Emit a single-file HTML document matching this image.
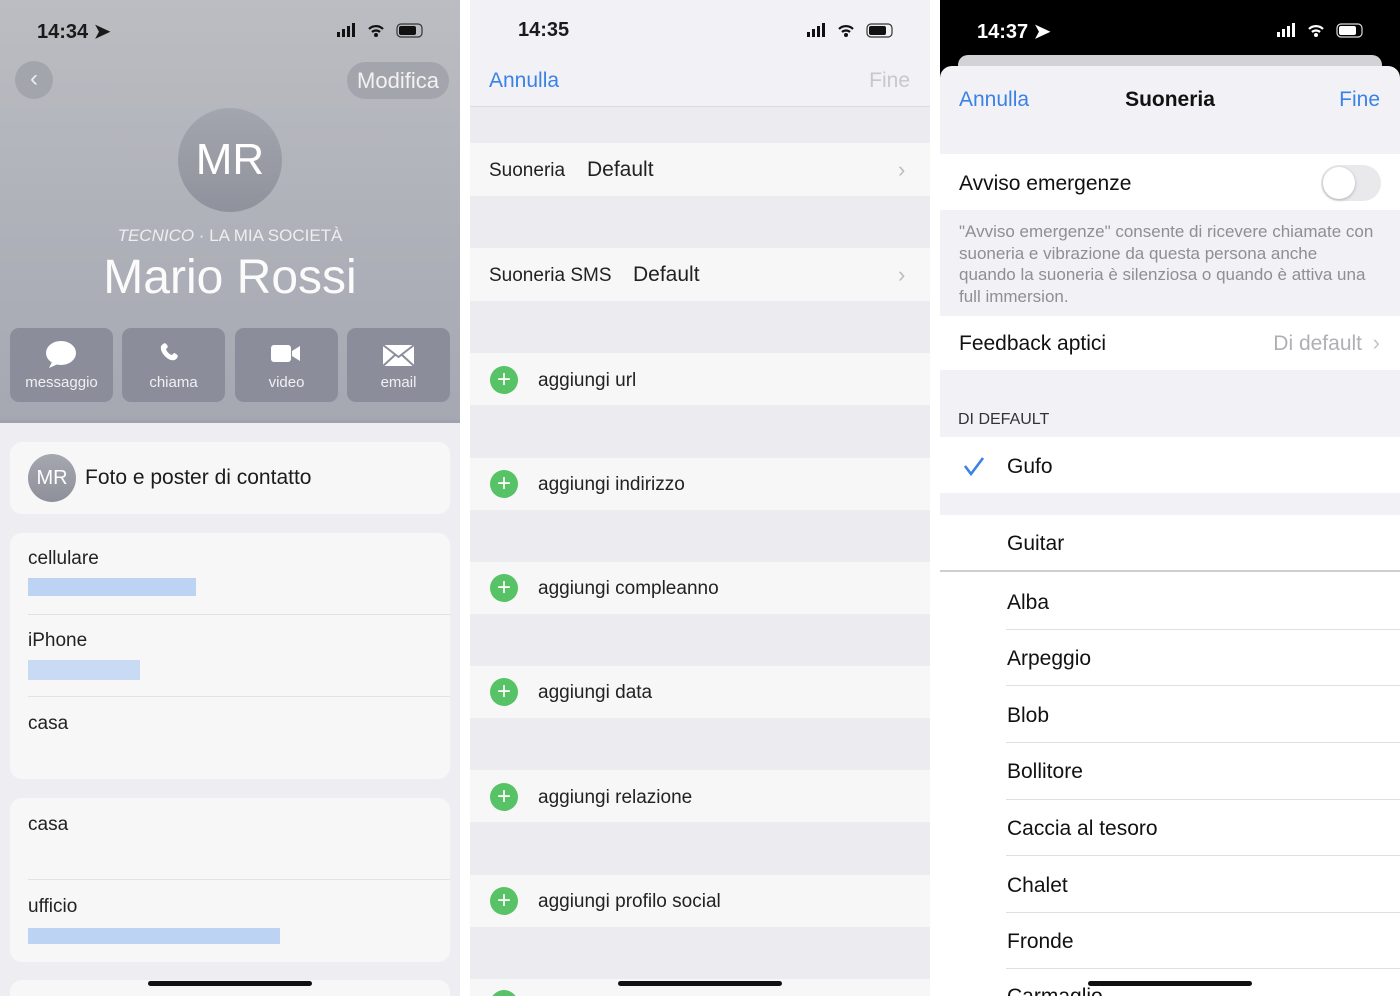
<!DOCTYPE html>
<html><head><meta charset="utf-8"><style>
*{margin:0;padding:0;box-sizing:border-box}
body{width:1400px;height:996px;overflow:hidden;background:#fff;font-family:"Liberation Sans",sans-serif;position:relative}
.p{position:absolute;top:0;height:996px;overflow:hidden}
.abs{position:absolute}
.t{position:absolute;white-space:nowrap}
</style></head><body>
<!-- LEFT -->
<div class="p" style="left:0;width:460px;background:#eeeef2">
 <div class="abs" style="left:0;top:0;width:460px;height:422px;background:linear-gradient(#bbbdc2,#a5a7b2)"></div>
 <div class="abs" style="left:0;top:420px;width:460px;height:3px;background:#9fa1ab"></div>
 <div class="t" style="left:37px;top:19px;font-size:20px;font-weight:bold;color:#1a1a1a">14:34 ➤</div>
 <svg class="abs" style="left:335px;top:20px" width="100" height="20"><rect x="2" y="12" width="3" height="5" fill="#111"/><rect x="7" y="9" width="3" height="8" fill="#111"/><rect x="12" y="6" width="3" height="11" fill="#111"/><rect x="17" y="3" width="3" height="14" fill="#111"/><path d="M34 9a10 10 0 0 1 14 0M37 12a6 6 0 0 1 8 0" stroke="#111" stroke-width="2.2" fill="none"/><circle cx="41" cy="15" r="2" fill="#111"/><rect x="62" y="4" width="25" height="13" rx="4" fill="none" stroke="#333" stroke-width="1.2"/><rect x="64" y="6" width="17" height="9" rx="2" fill="#111"/></svg>
 <div class="abs" style="left:15px;top:61px;width:38px;height:38px;border-radius:50%;background:#a3a5ac;color:#eee;font-size:24px;text-align:center;line-height:36px">‹</div>
 <div class="abs" style="left:347px;top:62px;width:102px;height:37px;border-radius:19px;background:#a3a5ac;color:#f2f2f2;font-size:22px;text-align:center;line-height:38px">Modifica</div>
 <div class="abs" style="left:178px;top:108px;width:104px;height:104px;border-radius:50%;background:linear-gradient(#a4a6ae,#8f919c);color:#fff;font-size:44px;text-align:center;line-height:104px">MR</div>
 <div class="t" style="left:0;width:460px;text-align:center;top:226px;font-size:17px;color:#eeeef0"><i>TECNICO</i> · LA MIA SOCIETÀ</div>
 <div class="t" style="left:0;width:460px;text-align:center;top:250px;font-size:48px;color:#fbfbfb">Mario Rossi</div>
 <div class="abs" style="left:10px;top:328px;width:103px;height:74px;border-radius:9px;background:#8b8d9a"></div>
 <div class="abs" style="left:122px;top:328px;width:103px;height:74px;border-radius:9px;background:#8b8d9a"></div>
 <div class="abs" style="left:235px;top:328px;width:103px;height:74px;border-radius:9px;background:#8b8d9a"></div>
 <div class="abs" style="left:347px;top:328px;width:103px;height:74px;border-radius:9px;background:#8b8d9a"></div>
 <svg class="abs" style="left:0;top:336px" width="460" height="34"><ellipse cx="61" cy="17" rx="15" ry="12" fill="#fff"/><path d="M52 26l-3 6 9-4z" fill="#fff"/><path d="M163 8c2-2 4 0 5 3l-2 2c1 3 3 5 6 6l2-2c3 1 5 3 3 5-2 3-6 3-10 0s-7-8-6-12z" fill="#fff"/><rect x="271" y="9" width="20" height="17" rx="3" fill="#fff"/><path d="M292 15l8-5v15l-8-5z" fill="#fff"/><rect x="383" y="9" width="31" height="21" fill="#fff"/><path d="M383 9l15.5 12L414 9M383 30l12-11M414 30l-12-11" stroke="#8b8d9a" stroke-width="2" fill="none"/></svg>
 <div class="t" style="left:10px;width:103px;text-align:center;top:374px;font-size:15px;color:#f0f0f2">messaggio</div>
 <div class="t" style="left:122px;width:103px;text-align:center;top:374px;font-size:15px;color:#f0f0f2">chiama</div>
 <div class="t" style="left:235px;width:103px;text-align:center;top:374px;font-size:15px;color:#f0f0f2">video</div>
 <div class="t" style="left:347px;width:103px;text-align:center;top:374px;font-size:15px;color:#f0f0f2">email</div>
 <div class="abs" style="left:10px;top:442px;width:440px;height:72px;border-radius:12px;background:#f7f7f8"></div>
 <div class="abs" style="left:28px;top:454px;width:48px;height:48px;border-radius:50%;background:linear-gradient(#a6a8b0,#8d8f9a);color:#fff;font-size:20px;text-align:center;line-height:48px">MR</div>
 <div class="t" style="left:85px;top:466px;font-size:21px;color:#1c1c1c">Foto e poster di contatto</div>
 <div class="abs" style="left:10px;top:533px;width:440px;height:246px;border-radius:12px;background:#f7f7f8"></div>
 <div class="t" style="left:28px;top:548px;font-size:19px;color:#222">cellulare</div>
 <div class="abs" style="left:28px;top:578px;width:168px;height:18px;background:#bcd3f3"></div>
 <div class="abs" style="left:28px;top:614px;width:422px;height:1px;background:#e2e2e4"></div>
 <div class="t" style="left:28px;top:630px;font-size:19px;color:#222">iPhone</div>
 <div class="abs" style="left:28px;top:660px;width:112px;height:20px;background:#c9daf4"></div>
 <div class="abs" style="left:28px;top:696px;width:422px;height:1px;background:#e2e2e4"></div>
 <div class="t" style="left:28px;top:713px;font-size:19px;color:#222">casa</div>
 <div class="abs" style="left:10px;top:798px;width:440px;height:164px;border-radius:12px;background:#f7f7f8"></div>
 <div class="t" style="left:28px;top:814px;font-size:19px;color:#222">casa</div>
 <div class="abs" style="left:28px;top:879px;width:422px;height:1px;background:#e2e2e4"></div>
 <div class="t" style="left:28px;top:896px;font-size:19px;color:#222">ufficio</div>
 <div class="abs" style="left:28px;top:928px;width:252px;height:16px;background:#bcd3f3"></div>
 <div class="abs" style="left:10px;top:980px;width:440px;height:30px;border-radius:12px;background:#f7f7f8"></div>
 <div class="abs" style="left:148px;top:981px;width:164px;height:5px;border-radius:3px;background:#111"></div>
</div>
<!-- MIDDLE -->
<div class="p" style="left:470px;width:460px;background:#ececf0">
 <div class="abs" style="left:0;top:0;width:460px;height:107px;background:#f2f2f6;border-bottom:1px solid #dcdce0"></div>
 <div class="t" style="left:48px;top:19px;font-size:20px;font-weight:bold;color:#1a1a1a">14:35</div>
 <svg class="abs" style="left:335px;top:20px" width="100" height="20"><rect x="2" y="12" width="3" height="5" fill="#111"/><rect x="7" y="9" width="3" height="8" fill="#111"/><rect x="12" y="6" width="3" height="11" fill="#111"/><rect x="17" y="3" width="3" height="14" fill="#111"/><path d="M34 9a10 10 0 0 1 14 0M37 12a6 6 0 0 1 8 0" stroke="#111" stroke-width="2.2" fill="none"/><circle cx="41" cy="15" r="2" fill="#111"/><rect x="62" y="4" width="25" height="13" rx="4" fill="none" stroke="#333" stroke-width="1.2"/><rect x="64" y="6" width="17" height="9" rx="2" fill="#111"/></svg>
 <div class="t" style="left:19px;top:69px;font-size:21px;color:#3a82e6">Annulla</div>
 <div class="t" style="right:20px;top:69px;font-size:21px;color:#c8c8cc">Fine</div>
 <div class="abs" style="left:0;top:143px;width:460px;height:53px;background:#f7f7f8"></div>
 <div class="t" style="left:19px;top:160px;font-size:19px;color:#222">Suoneria</div>
 <div class="t" style="left:117px;top:158px;font-size:21px;color:#222">Default</div>
 <div class="t" style="left:428px;top:157px;font-size:22px;color:#bbb">›</div>
 <div class="abs" style="left:0;top:248px;width:460px;height:53px;background:#f7f7f8"></div>
 <div class="t" style="left:19px;top:265px;font-size:19px;color:#222">Suoneria SMS</div>
 <div class="t" style="left:163px;top:263px;font-size:21px;color:#222">Default</div>
 <div class="t" style="left:428px;top:262px;font-size:22px;color:#bbb">›</div>
 <div class="abs" style="left:0;top:353px;width:460px;height:52px;background:#f7f7f8"></div>
 <div class="abs" style="left:0;top:458px;width:460px;height:52px;background:#f7f7f8"></div>
 <div class="abs" style="left:0;top:562px;width:460px;height:52px;background:#f7f7f8"></div>
 <div class="abs" style="left:0;top:666px;width:460px;height:52px;background:#f7f7f8"></div>
 <div class="abs" style="left:0;top:770px;width:460px;height:52px;background:#f7f7f8"></div>
 <div class="abs" style="left:0;top:875px;width:460px;height:52px;background:#f7f7f8"></div>
 <div class="abs" style="left:0;top:979px;width:460px;height:30px;background:#f7f7f8"></div>
 <div class="abs" style="left:20px;top:366px;width:28px;height:28px;border-radius:50%;background:#57c266;color:#fff;text-align:center;line-height:27px;font-size:24px">+</div>
 <div class="abs" style="left:20px;top:470px;width:28px;height:28px;border-radius:50%;background:#57c266;color:#fff;text-align:center;line-height:27px;font-size:24px">+</div>
 <div class="abs" style="left:20px;top:574px;width:28px;height:28px;border-radius:50%;background:#57c266;color:#fff;text-align:center;line-height:27px;font-size:24px">+</div>
 <div class="abs" style="left:20px;top:678px;width:28px;height:28px;border-radius:50%;background:#57c266;color:#fff;text-align:center;line-height:27px;font-size:24px">+</div>
 <div class="abs" style="left:20px;top:783px;width:28px;height:28px;border-radius:50%;background:#57c266;color:#fff;text-align:center;line-height:27px;font-size:24px">+</div>
 <div class="abs" style="left:20px;top:887px;width:28px;height:28px;border-radius:50%;background:#57c266;color:#fff;text-align:center;line-height:27px;font-size:24px">+</div>
 <div class="abs" style="left:20px;top:990px;width:28px;height:28px;border-radius:50%;background:#57c266"></div>
 <div class="t" style="left:68px;top:370px;font-size:19px;color:#222">aggiungi url</div>
 <div class="t" style="left:68px;top:474px;font-size:19px;color:#222">aggiungi indirizzo</div>
 <div class="t" style="left:68px;top:578px;font-size:19px;color:#222">aggiungi compleanno</div>
 <div class="t" style="left:68px;top:682px;font-size:19px;color:#222">aggiungi data</div>
 <div class="t" style="left:68px;top:787px;font-size:19px;color:#222">aggiungi relazione</div>
 <div class="t" style="left:68px;top:891px;font-size:19px;color:#222">aggiungi profilo social</div>
 <div class="abs" style="left:148px;top:981px;width:164px;height:5px;border-radius:3px;background:#111"></div>
</div>
<!-- RIGHT -->
<div class="p" style="left:940px;width:460px;background:#000">
 <div class="t" style="left:37px;top:19px;font-size:20px;font-weight:bold;color:#fff">14:37 ➤</div>
 <svg class="abs" style="left:335px;top:20px" width="100" height="20"><rect x="2" y="12" width="3" height="5" fill="#fff"/><rect x="7" y="9" width="3" height="8" fill="#fff"/><rect x="12" y="6" width="3" height="11" fill="#fff"/><rect x="17" y="3" width="3" height="14" fill="#fff"/><path d="M34 9a10 10 0 0 1 14 0M37 12a6 6 0 0 1 8 0" stroke="#fff" stroke-width="2.2" fill="none"/><circle cx="41" cy="15" r="2" fill="#fff"/><rect x="62" y="4" width="25" height="13" rx="4" fill="none" stroke="#ddd" stroke-width="1.2"/><rect x="64" y="6" width="17" height="9" rx="2" fill="#fff"/></svg>
 <div class="abs" style="left:18px;top:55px;width:424px;height:30px;border-radius:10px;background:#d3d3d7"></div>
 <div class="abs" style="left:0;top:66px;width:460px;height:940px;border-radius:12px 12px 0 0;background:#f2f2f6"></div>
 <div class="t" style="left:19px;top:88px;font-size:21px;color:#3a82e6">Annulla</div>
 <div class="t" style="left:0;width:460px;text-align:center;top:88px;font-size:21px;font-weight:bold;color:#111">Suoneria</div>
 <div class="t" style="right:20px;top:88px;font-size:21px;color:#3a82e6">Fine</div>
 <div class="abs" style="left:0;top:154px;width:460px;height:56px;background:#fff"></div>
 <div class="t" style="left:19px;top:172px;font-size:21px;color:#111">Avviso emergenze</div>
 <div class="abs" style="left:381px;top:165px;width:60px;height:36px;border-radius:18px;background:#e9e9eb"></div>
 <div class="abs" style="left:383px;top:167px;width:32px;height:32px;border-radius:50%;background:#fff;box-shadow:0 1px 3px rgba(0,0,0,.25)"></div>
 <div class="abs" style="left:19px;top:221px;width:418px;font-size:17px;line-height:21.5px;color:#8e8e93">"Avviso emergenze" consente di ricevere chiamate con suoneria e vibrazione da questa persona anche quando la suoneria è silenziosa o quando è attiva una full immersion.</div>
 <div class="abs" style="left:0;top:316px;width:460px;height:54px;background:#fff"></div>
 <div class="t" style="left:19px;top:332px;font-size:21px;color:#111">Feedback aptici</div>
 <div class="t" style="right:38px;top:332px;font-size:21px;color:#b0b0b4">Di default</div>
 <div class="t" style="right:20px;top:330px;font-size:22px;color:#c4c4c8">›</div>
 <div class="t" style="left:18px;top:411px;font-size:16px;color:#333">DI DEFAULT</div>
 <div class="abs" style="left:0;top:437px;width:460px;height:56px;background:#fff"></div>
 <svg class="abs" style="left:22px;top:455px" width="24" height="22"><path d="M3 11l6 8L21 3" stroke="#3a82e6" stroke-width="2.6" fill="none"/></svg>
 <div class="t" style="left:67px;top:455px;font-size:21px;color:#111">Gufo</div>
 <div class="abs" style="left:0;top:515px;width:460px;height:500px;background:#fff"></div>
 <div class="t" style="left:67px;top:532px;font-size:21px;color:#111">Guitar</div>
 <div class="abs" style="left:0;top:570px;width:460px;height:2px;background:#cfcfd2"></div>
 <div class="t" style="left:67px;top:591px;font-size:21px;color:#111">Alba</div>
 <div class="abs" style="left:66px;top:629px;width:394px;height:1px;background:#e0e0e2"></div>
 <div class="t" style="left:67px;top:647px;font-size:21px;color:#111">Arpeggio</div>
 <div class="abs" style="left:66px;top:685px;width:394px;height:1px;background:#e0e0e2"></div>
 <div class="t" style="left:67px;top:704px;font-size:21px;color:#111">Blob</div>
 <div class="abs" style="left:66px;top:742px;width:394px;height:1px;background:#e0e0e2"></div>
 <div class="t" style="left:67px;top:760px;font-size:21px;color:#111">Bollitore</div>
 <div class="abs" style="left:66px;top:799px;width:394px;height:1px;background:#e0e0e2"></div>
 <div class="t" style="left:67px;top:817px;font-size:21px;color:#111">Caccia al tesoro</div>
 <div class="abs" style="left:66px;top:855px;width:394px;height:1px;background:#e0e0e2"></div>
 <div class="t" style="left:67px;top:874px;font-size:21px;color:#111">Chalet</div>
 <div class="abs" style="left:66px;top:912px;width:394px;height:1px;background:#e0e0e2"></div>
 <div class="t" style="left:67px;top:930px;font-size:21px;color:#111">Fronde</div>
 <div class="abs" style="left:66px;top:968px;width:394px;height:1px;background:#e0e0e2"></div>
 <div class="t" style="left:67px;top:985px;font-size:21px;color:#111">Carmaglio</div>
 <div class="abs" style="left:148px;top:981px;width:164px;height:5px;border-radius:3px;background:#111"></div>
</div>
</body></html>
